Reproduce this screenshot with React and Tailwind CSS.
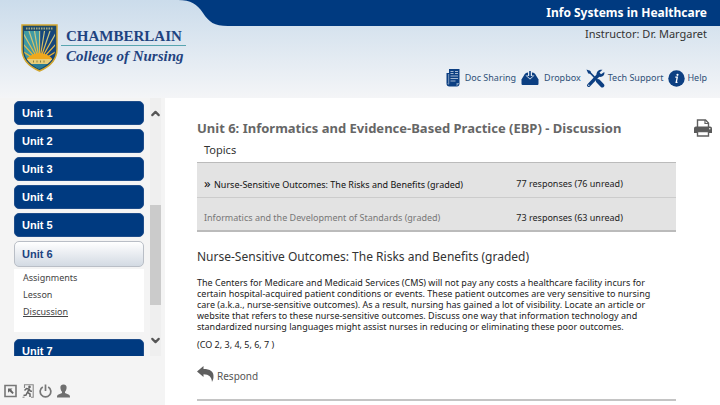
import { useState } from "react";
import { ChevronUp, ChevronDown } from "lucide-react";

const units = [
  { id: 1, pages: [] },
  { id: 2, pages: [] },
  { id: 3, pages: [] },
  { id: 4, pages: [] },
  { id: 5, pages: [] },
  { id: 6, pages: ["Assignments", "Lesson", "Discussion"] },
  { id: 7, pages: [] },
];

const topics = [
  { id: 1, title: "Nurse-Sensitive Outcomes: The Risks and Benefits (graded)", total: 77, unread: 76 },
  { id: 2, title: "Informatics and the Development of Standards (graded)", total: 73, unread: 63 },
];

function Shield() {
  return (
    <svg width="37" height="48" viewBox="0 0 37 48" aria-hidden="true">
      <defs>
        <clipPath id="shield-field">
          <path d="M3 7H34V25C34 35 27 41 18.5 45C10 41 3 35 3 25Z" />
        </clipPath>
        <linearGradient id="shield-rays" x1="0" y1="0" x2="0" y2="1">
          <stop offset="0.2" stopColor="#c9c684" />
          <stop offset="0.8" stopColor="#f0b02c" />
        </linearGradient>
      </defs>
      <path d="M1 1H36V25C36 37 28 43 18.500 47C9 43 1 37 1 25Z" fill="#1d4a6b" stroke="#d3a72f" strokeWidth="1.500" />
      <g clipPath="url(#shield-field)">
        <path d="M3 7H18.500V46H3Z" fill="#3f9aa4" />
        <path d="M18.500 7H34V46H18.500Z" fill="#15467c" />
        <path
          d="M18.500 38L1 27M18.500 38L1 19M18.500 38L2 9M18.500 38L8 7M18.500 38L13.500 7M18.500 38L18.600 7M18.500 38L23.500 7M18.500 38L29 7M18.500 38L35 9M18.500 38L36 19M18.500 38L36 27"
          stroke="url(#shield-rays)"
          strokeWidth="1.200"
        />
        <path d="M5 36C10 27 27 27 32 36Z" fill="#efa81d" />
        <path d="M0 35H37V40H0Z" fill="#e9cd78" />
        <path d="M0 40H37V48H0Z" fill="#2b7c94" />
      </g>
      <path d="M5 4.500H32" stroke="#a3a882" strokeWidth="2" strokeDasharray="1.500 1" />
      <path d="M12 37.500H25" stroke="#8f8340" strokeWidth="2" strokeDasharray="1 2.500" />
    </svg>
  );
}

function Logo() {
  return (
    <a href="#home" className="flex items-start self-start pl-[21px] pt-6 font-['Liberation_Serif',serif] text-[15px] font-bold text-[#1f4380]">
      <Shield />
      <span className="ml-[3px] flex flex-col pt-1">
        <span className="border-b border-[#58a5b0] pl-[5px] pr-1 leading-[17px]">CHAMBERLAIN</span>
        <span className="pl-[5px] pt-[2px] italic leading-[17px]">College of Nursing</span>
      </span>
    </a>
  );
}

function DocIcon() {
  return (
    <svg width="14" height="18" viewBox="0 0 14 18" aria-hidden="true">
      <path d="M3 0H13.500V14.500C13.500 16.500 12.500 17.500 11 17.500H3.500C1.500 17.500 0.500 16.500 0.500 14.500V4H3Z" fill="#0c3f82" />
      <path d="M4.500 2.500H7.500M4.500 4.500H7.500M9 2.500H12M9 4.500H12M4.500 7H12M4.500 9.500H12M4.500 12H9.500" stroke="#b4c5da" strokeWidth="0.900" />
      <path d="M2.700 5V14.500C2.700 15.500 1.800 15.500 1.800 14.500" stroke="#b4c5da" strokeWidth="0.700" fill="none" />
      <path d="M10.500 17.500V14H13.500Z" fill="#7d9cc0" />
    </svg>
  );
}

function DropboxIcon() {
  return (
    <svg width="18" height="15" viewBox="0 0 18 15" aria-hidden="true">
      <path d="M3.500 3.500C5 1.500 6.500 1.500 8 1.500H10C12 1.500 13 1.500 14.500 3.500L17.500 8.500V12.500C17.500 13.500 17 14 16 14H2C1 14 0.500 13.500 0.500 12.500V8.500Z" fill="#0c3f82" />
      <path d="M7 1V4.500H4.500L9 8.500L13.500 4.500H11V1Z" fill="#dfe7f0" />
      <path d="M8.200 0H9.800V5H12L9 7.500L6 5H8.200Z" fill="#0c3f82" />
    </svg>
  );
}

function ToolsIcon() {
  return (
    <svg width="19" height="19" viewBox="0 0 19 19" aria-hidden="true">
      <path d="M2.500 2L11.500 11.500" stroke="#0c3f82" strokeWidth="1.800" />
      <path d="M0.500 0.500L4.500 2L5 4.800L2.200 4.500Z" fill="#0c3f82" />
      <path d="M12 12L16.300 16.500" stroke="#0c3f82" strokeWidth="4" strokeLinecap="round" />
      <path d="M2.700 16.300L12.500 6" stroke="#0c3f82" strokeWidth="3.400" strokeLinecap="round" />
      <path d="M16.500 0.800L13.500 3.500L15 5.300L18.300 3C19 6 16.500 8.500 13 7.800L10.500 5.500C10.500 2.500 13 0.300 16.500 0.800Z" fill="#0c3f82" />
      <circle cx="2.800" cy="16.200" r="0.700" fill="#e6ebf1" />
    </svg>
  );
}

function InfoIcon() {
  return (
    <svg width="17" height="17" viewBox="0 0 17 17" aria-hidden="true">
      <circle cx="8.500" cy="8.500" r="8.200" fill="#0c3f82" />
      <circle cx="9.500" cy="4.800" r="1.100" fill="#fff" />
      <path d="M7.300 7.200H9.300L8.200 12.300H9.500" stroke="#fff" strokeWidth="1.300" fill="none" />
    </svg>
  );
}

function CollapseIcon() {
  return (
    <svg width="13" height="14" viewBox="0 0 13 14" aria-hidden="true">
      <path d="M1 1.500H12V12.500H1Z" fill="none" stroke="#777" strokeWidth="1.600" />
      <path d="M4 4.500H8.500L7.200 5.800L9.800 8.800L8.500 10L5.500 7.200L4 8.800Z" fill="#666" />
    </svg>
  );
}

function ExitIcon() {
  return (
    <svg width="12" height="14" viewBox="0 0 12 14" aria-hidden="true">
      <path d="M2.500 4V0.800H11.200V13.200H9M2.500 13.200H0.500" fill="none" stroke="#888" strokeWidth="1.100" />
      <circle cx="7.500" cy="2.900" r="1.300" fill="#666" />
      <path d="M2.500 6.500L4.500 4.500L7 5L5.500 8.500L8 10V13M7 5L8.200 7L10 7.200M5.300 8.500L4 11L1.500 11.500" fill="none" stroke="#666" strokeWidth="1.500" />
    </svg>
  );
}

function PowerIcon() {
  return (
    <svg width="13" height="14" viewBox="0 0 13 14" aria-hidden="true">
      <path d="M3.800 3A5.300 5.300 0 1 0 9.200 3M6.500 0.500V7" fill="none" stroke="#777" strokeWidth="1.700" />
    </svg>
  );
}

function ProfileIcon() {
  return (
    <svg width="13" height="14" viewBox="0 0 13 14" aria-hidden="true">
      <path d="M6.500 0.500C8.800 0.500 9.800 2 9.600 4C9.400 6 8.500 7.200 8 7.800V9L12 10.800C12.800 11.200 13 12 13 13.500H0C0 12 0.200 11.200 1 10.800L5 9V7.800C4.500 7.200 3.600 6 3.400 4C3.200 2 4.200 0.500 6.500 0.500Z" fill="#6f6f6f" />
    </svg>
  );
}

function PrintIcon() {
  return (
    <svg width="18" height="18" viewBox="0 0 18 18" aria-hidden="true">
      <path d="M3.500 8V1H11.500L14.500 4V8" fill="none" stroke="#5f5f5f" strokeWidth="1.400" />
      <path d="M11 1V4.500H14.500" fill="none" stroke="#5f5f5f" strokeWidth="1.200" />
      <path d="M2 7.500H16C17.200 7.500 18 8.300 18 9.500V14H0V9.500C0 8.300 0.800 7.500 2 7.500Z" fill="#5a5a5a" />
      <path d="M3.500 12.500H14.500V17H3.500Z" fill="#fff" stroke="#5f5f5f" strokeWidth="1.400" />
      <circle cx="15.800" cy="9.700" r="0.700" fill="#fff" />
    </svg>
  );
}

function RespondIcon() {
  return (
    <svg width="17" height="16" viewBox="0 0 17 16" aria-hidden="true">
      <path d="M0 5.500L6.500 0V3C13 3 17 5.500 16.500 11C16.400 13 15.800 14.500 15 16C14.800 11 12 8.200 6.500 8.200V11Z" fill="#5f5f5f" />
    </svg>
  );
}

const tools = [
  { label: "Doc Sharing", Icon: DocIcon, gap: "gap-[5px]" },
  { label: "Dropbox", Icon: DropboxIcon, gap: "gap-[5px]" },
  { label: "Tech Support", Icon: ToolsIcon, gap: "gap-[3px]" },
  { label: "Help", Icon: InfoIcon, gap: "gap-[2px]" },
];

function Header() {
  return (
    <header className="flex h-[98px] bg-linear-to-b from-[#cbdceb] to-[#f4f5f7]">
      <Logo />
      <div className="flex flex-1 flex-col">
        <div className="-ml-2 flex h-[26px]">
          <svg width="50" height="26" viewBox="0 0 50 26" aria-hidden="true">
            <path d="M0 0C13 0 19 4 25 13C31 22 36 26 50 26V0Z" fill="#003a80" />
          </svg>
          <h1 className="flex flex-1 items-center justify-end bg-[#003a80] pr-[13px] text-[12px] font-bold text-white">
            Info Systems in Healthcare
          </h1>
        </div>
        <p className="pr-[13px] pt-px text-right text-[11px] leading-[14px] text-[#333]">Instructor: Dr. Margaret</p>
        <nav className="flex items-center justify-end gap-[5px] pr-[13px] pt-[27px]">
          {tools.map(({ label, Icon, gap }) => (
            <a key={label} href="#tools" className={`flex h-5 items-center text-[9px] text-[#2f5078] ${gap}`}>
              <Icon />
              {label}
            </a>
          ))}
        </nav>
      </div>
    </header>
  );
}

function Sidebar({ open, setOpen }) {
  return (
    <aside className="flex w-[165px] shrink-0 flex-col bg-[#f4f4f4]">
      <div className="flex h-[258px] pl-[14px]">
        <ul className="w-[130px] overflow-hidden pt-[3px]">
          {units.map((unit) => (
            <li key={unit.id} className="mb-1">
              <button
                onClick={() => setOpen(unit.id)}
                className={`block w-full rounded-[5px] border pl-[7px] text-left font-['Liberation_Sans',sans-serif] text-[11px] font-bold ${
                  open === unit.id
                    ? "h-[26px] border-[#b9bec6] bg-linear-to-b from-white to-[#d3dae3] text-[#1c4380]"
                    : "h-6 border-[#1f4d8a] bg-[#003a80] text-white"
                }`}
              >
                Unit {unit.id}
              </button>
              {open === unit.id && unit.pages.length > 0 && (
                <ul className="mb-[7px] mt-[2px] h-[63px] bg-white pl-[9px] text-[9px] leading-[17px] text-[#444]">
                  {unit.pages.map((page) => (
                    <li key={page}>
                      <a href="#page" className={page === "Discussion" ? "underline" : ""}>{page}</a>
                    </li>
                  ))}
                </ul>
              )}
            </li>
          ))}
        </ul>

        {/* Scrollbar */}
        <div className="ml-[6px] flex w-[11px] flex-col items-center bg-[#efefef]">
          <ChevronUp size={13} strokeWidth={4} color="#555" className="mt-[9px]" />
          <div className="mt-[85px] h-[100px] w-full bg-[#cbcbcb]" />
          <ChevronDown size={13} strokeWidth={4} color="#555" className="mt-[29px]" />
        </div>
      </div>

      <div className="flex items-center gap-[5px] pl-1 pt-7">
        <button aria-label="Collapse"><CollapseIcon /></button>
        <button aria-label="Exit"><ExitIcon /></button>
        <button aria-label="Log out"><PowerIcon /></button>
        <button aria-label="Profile"><ProfileIcon /></button>
      </div>
    </aside>
  );
}

export default function App() {
  const [open, setOpen] = useState(6);

  return (
    <div className="flex min-h-screen flex-col bg-white font-['Noto_Sans',sans-serif]">
      <Header />
      <div className="flex flex-1">
        <Sidebar open={open} setOpen={setOpen} />

        <main className="min-w-0 flex-1 pl-8 pr-2">
          <div className="flex items-center justify-between pt-5">
            <h2 className="text-[13px] font-bold leading-5 text-[#666]">
              Unit 6: Informatics and Evidence-Based Practice (EBP) - Discussion
            </h2>
            <button aria-label="Print"><PrintIcon /></button>
          </div>

          <div className="mr-9">
            <table className="w-full table-fixed border-collapse text-left text-[9px] text-[#222]">
              <caption className="pb-[3px] pl-[7px] pt-[2px] text-left text-[11px] leading-[19px] text-[#333]">Topics</caption>
              <tbody>
                {topics.map((topic, i) => (
                  <tr
                    key={topic.id}
                    className={`bg-[#e3e3e3] ${i === 0 ? "h-[35px] border-t border-[#bbb]" : "h-[33px] border-b-2 border-t border-b-[#bbb] border-t-[#ccc]"}`}
                  >
                    <td className="w-2/3 pl-[7px] pt-2">
                      <a href="#topic" className={i === 0 ? "text-[#111]" : "text-[#777]"}>
                        {i === 0 && <span className="text-[13px] leading-3">» </span>}
                        {topic.title}
                      </a>
                    </td>
                    <td className="pt-2">{topic.total} responses ({topic.unread} unread)</td>
                  </tr>
                ))}
              </tbody>
            </table>

            <h3 className="pt-4 text-[12px] leading-[17px] text-[#333]">
              Nurse-Sensitive Outcomes: The Risks and Benefits (graded)
            </h3>
            <p className="pr-3 pt-3 text-[9px] leading-[11px] text-[#222]">
              The Centers for Medicare and Medicaid Services (CMS) will not pay any costs a healthcare facility incurs for
              certain hospital-acquired patient conditions or events. These patient outcomes are very sensitive to nursing
              care (a.k.a., nurse-sensitive outcomes). As a result, nursing has gained a lot of visibility. Locate an article or
              website that refers to these nurse-sensitive outcomes. Discuss one way that information technology and
              standardized nursing languages might assist nurses in reducing or eliminating these poor outcomes.
            </p>
            <p className="pt-[7px] text-[9px] leading-[11px] text-[#222]">(CO 2, 3, 4, 5, 6, 7 )</p>

            <button className="mt-4 flex items-end gap-[3px] text-[10px] leading-3 text-[#555]">
              <RespondIcon />
              Respond
            </button>
          </div>
          <hr className="mr-9 mt-[17px] border-t-2 border-[#c4c4c4]" />
        </main>
      </div>
    </div>
  );
}
